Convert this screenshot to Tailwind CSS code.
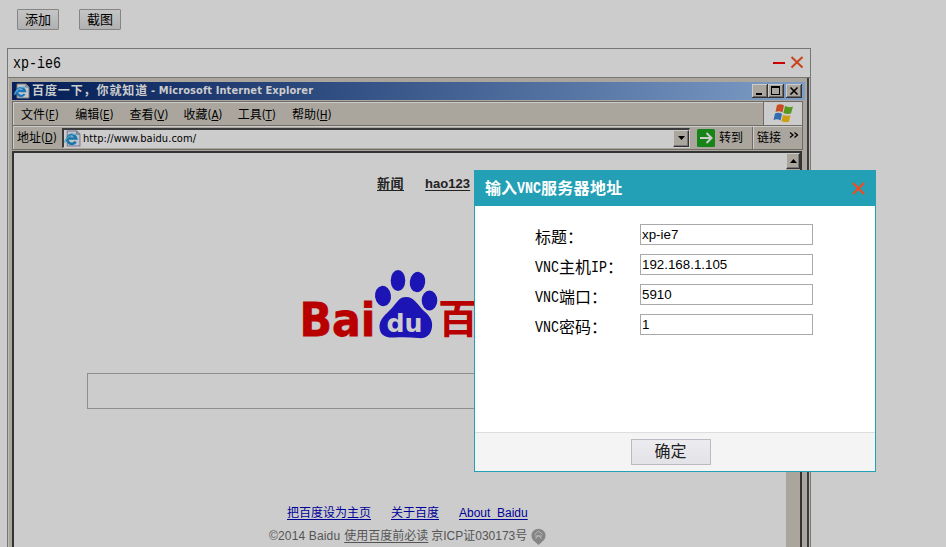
<!DOCTYPE html>
<html lang="zh-CN">
<head>
<meta charset="utf-8">
<title>VNC</title>
<script src="https://cdn.jsdelivr.net/npm/@tailwindcss/browser@4"></script>
</head>
<body class="relative h-[547px] w-[946px] overflow-hidden bg-[#cccccc] text-black font-['Liberation_Sans','Noto_Sans_CJK_SC',sans-serif]">

<div class="flex gap-5 pl-[17px] pt-[9px]">
  <button class="h-[21px] w-[42px] rounded-[1px] border border-[#858585] bg-gradient-to-b from-[#c5c5c5] to-[#b1b1b1] text-[13px] leading-[19px]">添加</button>
  <button class="h-[21px] w-[42px] rounded-[1px] border border-[#858585] bg-gradient-to-b from-[#c5c5c5] to-[#b1b1b1] text-[13px] leading-[19px]">截图</button>
</div>

<section class="ml-[7px] mt-[18px] flex h-[520px] w-[804px] flex-col border border-[#777777]">
  <header class="flex h-[29px] shrink-0 items-center border-b border-[#777777] pl-[5px] pr-[6px]">
    <div class="grow pt-[2px] font-['Liberation_Mono',monospace] text-[13.33px] leading-4"><span class="inline-block scale-y-120">xp-ie6</span></div>
    <svg class="-mt-0.5" width="32" height="14" viewBox="0 0 32 14"><path d="M1 8h12" stroke="#cc0000" stroke-width="2"/><path d="M19.5 2l11 10.500M30.500 2l-11 10.500" stroke="#c8421a" stroke-width="2"/></svg>
  </header>

  <div class="flex grow flex-col border-x border-[#bdbab4] bg-[#aaa69e] pl-[3px] pr-0">
    <div class="flex grow">
      <div class="flex w-[793px] flex-col">
        <div class="mt-1 flex h-[18px] shrink-0 items-center bg-gradient-to-r from-[#08215a] from-5% to-[#7e9dc6] pl-[2px] pr-[3px]">
          <svg width="16" height="16" viewBox="0 0 16 16"><path d="M3 1h9l3 3v11H3z" fill="#c8c8c8" stroke="#77777a" stroke-width="1"/><path d="M12 1v3h3" fill="#999" stroke="#777"/><path d="M10.500 11A4 4 0 1 1 11 8H4" fill="none" stroke="#1976bd" stroke-width="2.300"/><path d="M1 12C0 8 8 3 13 4" fill="none" stroke="#56a5d4" stroke-width="1.200"/></svg>
          <span class="ml-[2px] whitespace-nowrap text-[12px] font-bold leading-[18px] tracking-[0.9px] text-[#cccccc]">百度一下，你就知道</span>
          <span class="ml-[3px] whitespace-nowrap text-[11px] font-bold leading-[18px] tracking-[0.09px] text-[#cccccc] font-['DejaVu_Sans_Condensed','DejaVu_Sans',sans-serif]">- Microsoft Internet Explorer</span>
          <svg class="ml-auto" width="50" height="14" viewBox="0 0 50 14" shape-rendering="crispEdges">
            <g><path d="M0 0h16v14H0z" fill="#333"/><path d="M0 0h15v13H0z" fill="#ccc"/><path d="M1 1h14v12H1z" fill="#6a6761"/><path d="M1 1h13v11H1z" fill="#aaa69e"/></g>
            <g transform="translate(16)"><path d="M0 0h16v14H0z" fill="#333"/><path d="M0 0h15v13H0z" fill="#ccc"/><path d="M1 1h14v12H1z" fill="#6a6761"/><path d="M1 1h13v11H1z" fill="#aaa69e"/></g>
            <g transform="translate(34)"><path d="M0 0h16v14H0z" fill="#333"/><path d="M0 0h15v13H0z" fill="#ccc"/><path d="M1 1h14v12H1z" fill="#6a6761"/><path d="M1 1h13v11H1z" fill="#aaa69e"/></g>
            <path d="M4 9h6v2H4zM19 2h9v2h-9zM19 4h1v7h-1zM27 4h1v7h-1zM20 10h7v1h-7z"/><path d="M38.500 3.500l7 7M45.500 3.500l-7 7" stroke="#000" stroke-width="1.600" shape-rendering="auto"/>
          </svg>
        </div>
        <div class="mt-px flex h-[25px] w-[791px] shrink-0 items-center border border-[#6f6c67] shadow-[inset_1px_1px_0_#cccccc]">
          <nav class="flex grow gap-[17px] pl-[8px] pt-[2px] text-[12px] leading-[22px] *:w-[37.2px] *:whitespace-nowrap font-['DejaVu_Sans_Condensed','Noto_Sans_CJK_SC',sans-serif]">
            <span>文件<span class="text-[11.5px] tracking-[-0.2px]">(<u>F</u>)</span></span><span>编辑<span class="text-[11.5px] tracking-[-0.2px]">(<u>E</u>)</span></span><span>查看<span class="text-[11.5px] tracking-[-0.2px]">(<u>V</u>)</span></span><span>收藏<span class="text-[11.5px] tracking-[-0.2px]">(<u>A</u>)</span></span><span>工具<span class="text-[11.5px] tracking-[-0.2px]">(<u>T</u>)</span></span><span>帮助<span class="text-[11.5px] tracking-[-0.2px]">(<u>H</u>)</span></span>
          </nav>
          <div class="flex h-[23px] w-[39px] items-center justify-center border-l border-[#6f6c67] bg-[#cccccc]">
            <svg width="21" height="19" viewBox="0 0 21 19"><path d="M4 1q4-1.500 7 .5l-1.500 7q-3-2-7-.5z" fill="#c94b20"/><path d="M12 2q4 2 8 .5l-2 7q-4 1-7.500-.5z" fill="#56991c"/><path d="M2 9.500q4-1.500 7 .5l-1.500 6.500q-3-2-7-.5z" fill="#326bb0"/><path d="M10 11q4 1.500 7.500.3l-1.500 6.500q-4 1-7.500-.6z" fill="#cf9f13"/></svg>
          </div>
        </div>
        <div class="flex h-[24px] w-[791px] shrink-0 items-center border-x border-b border-[#6f6c67] text-[12px] shadow-[inset_1px_1px_0_#cccccc]">
          <span class="w-[49px] whitespace-nowrap pl-[4px] pt-px leading-[22px] font-['DejaVu_Sans_Condensed','Noto_Sans_CJK_SC',sans-serif]">地址<span class="text-[11.5px] tracking-[-0.2px]">(<u>D</u>)</span></span>
          <div class="flex h-5 w-[628px] items-center border-2 border-b border-r border-[#3a3a3a] border-b-[#cccccc] border-r-[#cccccc] bg-[#cccccc]">
            <svg width="17" height="17" viewBox="0 0 16 16"><path d="M3 1h9l3 3v11H3z" fill="#bfc4ca" stroke="#77779a" stroke-width="1"/><path d="M12 1v3h3" fill="#999" stroke="#777"/><path d="M11 11A4.200 4.200 0 1 1 11.500 8H4" fill="none" stroke="#1976a9" stroke-width="2.500"/><path d="M1 12C0 8 8 3 13 4" fill="none" stroke="#56a5c4" stroke-width="1.200"/></svg>
            <span class="ml-[2px] grow whitespace-nowrap pt-[2px] text-[11px] tracking-[0.05px] font-['DejaVu_Sans_Condensed',sans-serif]">http://www.baidu.com/</span>
            <div class="flex h-[17px] w-4 items-center justify-center border border-[#cccccc] border-b-[#333] border-r-[#333] bg-[#aaa69e] shadow-[inset_-1px_-1px_0_#777]"><svg width="7" height="4"><path d="M0 0h7L3.500 4z"/></svg></div>
          </div>
          <svg class="ml-[7px] shrink-0" width="18" height="18" viewBox="0 0 18 18"><rect width="18" height="18" rx="1.500" fill="#178417"/><path d="M3 9h11M9.500 4l5 5-5 5" fill="none" stroke="#ccc" stroke-width="2"/></svg>
          <span class="ml-[4px] w-[33px] shrink-0 leading-[22px]">转到</span>
          <span class="flex h-[22px] grow border-l border-[#6f6c67] pl-1 leading-[22px] shadow-[inset_1px_0_0_#cccccc]">链接<svg class="ml-[8px] mt-[5px]" width="10" height="7" viewBox="0 0 10 7"><path d="M1 .5l3 2.500-3 2.500M5.500 .5l3 2.500-3 2.500" fill="none" stroke="#000" stroke-width="1.300"/></svg></span>
        </div>
        <div class="mt-px flex w-[790px] grow border-r-2 border-t-2 border-l-2 border-[#333333] bg-[#cccccc]">
          <main class="w-[771px] shrink-0">
            <div class="flex gap-[21px] pl-[363px] pt-[22px] text-[13px] font-bold leading-[18px] text-[#222222] underline underline-offset-2">
              <span class="w-[27px] whitespace-nowrap tracking-[0.5px]">新闻</span><span class="tracking-[0.05px]">hao123</span>
            </div>
            <svg class="ml-[286px] mt-[73px] block overflow-visible" width="200" height="76" viewBox="300 266 200 76">
              <text x="299.500" y="336" font-family="DejaVu Sans, sans-serif" font-weight="bold" fill="#b90000" stroke="#b90000" stroke-width=".8" font-size="47" textLength="76" lengthAdjust="spacingAndGlyphs">Bai</text>
              <g fill="#1c14b4"><ellipse cx="383" cy="296" rx="8" ry="10.200" transform="rotate(-8 383 296)"/><ellipse cx="398" cy="280.500" rx="7.300" ry="10.500"/><ellipse cx="417.500" cy="282" rx="7.700" ry="10.200" transform="rotate(8 417.500 282)"/><ellipse cx="429.500" cy="300.500" rx="7.800" ry="10"/><path d="M406 297c8 0 12 8 17 13 6 5 10 10 9 17-1 8-6 12-14 11-8-1-16-1-24-.5-8 .5-14-2-14.500-10-.5-8 6-13 12-19 5-5 7-11.500 14.500-11.500z"/></g>
              <text x="386.500" y="332" font-family="DejaVu Sans, sans-serif" font-weight="bold" font-size="24" fill="#ccc" textLength="36" lengthAdjust="spacingAndGlyphs">du</text>
              <text x="438" y="333" font-family="Noto Sans CJK SC, sans-serif" font-weight="bold" font-size="40" fill="#b90000">百</text>
            </svg>
            <div class="ml-[73px] mt-[31px] h-[36px] w-[540px] border border-[#8e8e8e]"></div>
            <div class="flex pl-[273px] pt-[96px] text-[12px] leading-4 text-[#000099] underline underline-offset-2">
              <span class="w-[104px]">把百度设为主页</span><span class="w-[68px]">关于百度</span><span>About&nbsp; Baidu</span>
            </div>
            <div class="flex pl-[255px] pt-[7px] text-[12px] leading-4 text-[#555555]">
              <span class="whitespace-nowrap tracking-[0.15px]">©2014 Baidu</span><span class="ml-1 underline underline-offset-2">使用百度前必读</span><span class="ml-[3px] whitespace-nowrap">京ICP证030173号</span>
              <svg class="ml-1" width="15" height="18" viewBox="0 0 15 18"><path d="M7.500 17L2 12A7 7 0 1 1 13 12z" fill="#858585"/><path d="M3.500 6.500L7.500 3l4 3.500M4 8h7M7.500 7l-3 4M7.500 7l3 4" fill="none" stroke="#bbb" stroke-width="1"/></svg>
            </div>
          </main>
          <div class="grow border-l border-[#cccccc] bg-[#aaa69e]">
            <div class="flex h-4 items-center justify-center border border-[#cccccc] border-b-[#333] border-r-[#333] shadow-[inset_-1px_-1px_0_#777]"><svg width="7" height="4"><path d="M0 4h7L3.500 0z"/></svg></div>
          </div>
        </div>
      </div>
      <div class="ml-px w-[3px] border-r-2 border-[#3b3b3f]"></div>
      <div class="grow bg-[#cccccc]"></div>
    </div>
  </div>
</section>

<div role="dialog" class="absolute left-[474px] top-[170px] flex h-[302px] w-[402px] flex-col border border-[#23a0b5] bg-white">
  <header class="flex h-[35px] shrink-0 items-center bg-[#23a0b5] pl-[10px] pr-[10px] text-white">
    <h1 class="flex grow items-center text-[16px] font-bold leading-[34px]">输入<span class="inline-block scale-y-125 font-['Liberation_Mono',monospace] text-[13.33px]">VNC</span><span class="tracking-[0.3px]">服务器地址</span></h1>
    <svg class="-mt-px" width="13" height="13" viewBox="0 0 13 13"><path d="M1 1l11 11M12 1L1 12" stroke="#f04c20" stroke-width="2.200"/></svg>
  </header>
  <form class="flex grow flex-col gap-[9px] pl-[60px] pt-[18px] text-[16px]">
    <label class="flex h-[21px]"><span class="flex w-[105px] items-center pt-[6px] leading-5">标题：</span><input class="h-[21px] w-[173px] border border-[#a9a9a9] pl-px text-[13.33px] leading-[19px]" value="xp-ie7"></label>
    <label class="flex h-[21px]"><span class="flex w-[105px] items-center pt-[6px] leading-5"><span class="inline-block scale-y-125 font-['Liberation_Mono',monospace] text-[13.33px]">VNC</span>主机<span class="inline-block scale-y-125 font-['Liberation_Mono',monospace] text-[13.33px]">IP</span>：</span><input class="h-[21px] w-[173px] border border-[#a9a9a9] pl-px text-[13.33px] leading-[19px]" value="192.168.1.105"></label>
    <label class="flex h-[21px]"><span class="flex w-[105px] items-center pt-[6px] leading-5"><span class="inline-block scale-y-125 font-['Liberation_Mono',monospace] text-[13.33px]">VNC</span>端口：</span><input class="h-[21px] w-[173px] border border-[#a9a9a9] pl-px text-[13.33px] leading-[19px]" value="5910"></label>
    <label class="flex h-[21px]"><span class="flex w-[105px] items-center pt-[6px] leading-5"><span class="inline-block scale-y-125 font-['Liberation_Mono',monospace] text-[13.33px]">VNC</span>密码：</span><input class="h-[21px] w-[173px] border border-[#a9a9a9] pl-px text-[13.33px] leading-[19px]" value="1"></label>
  </form>
  <footer class="flex h-[39px] shrink-0 justify-center border-t border-[#dddddd] bg-[#f4f4f4] pr-[9px] pt-[6px]">
    <button class="h-[26px] w-[80px] border border-[#bbb9c2] bg-gradient-to-b from-[#ececf0] to-[#e2e2e7] text-[16px] leading-6 text-[#222222]">确定</button>
  </footer>
</div>
</body>
</html>
